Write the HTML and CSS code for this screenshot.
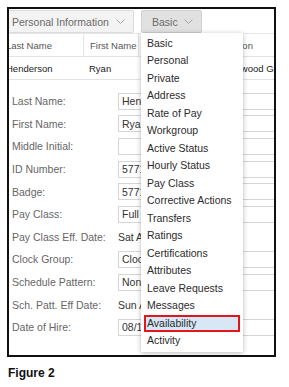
FILE: index.html
```html
<!DOCTYPE html>
<html>
<head>
    <title>Figure 2</title>
    <meta charset="UTF-8">
    <link rel="stylesheet" href="styles.css">
</head>
<body>
    <div class="frame">
        <div class="inner">
            <div class="toolbar">
                <div class="tab-button">Personal Information
                    <svg class="chev" width="9" height="5" viewBox="0 0 9 5"><polyline points="0.5,0.5 4.5,4.5 8.5,0.5" fill="none" stroke="#a8a8a8" stroke-width="1"/></svg>
                </div>
                <div class="tab-button active">Basic
                    <svg class="chev" width="9" height="5" viewBox="0 0 9 5"><polyline points="0.5,0.5 4.5,4.5 8.5,0.5" fill="none" stroke="#a8a8a8" stroke-width="1"/></svg>
                </div>
            </div>

            <div class="grid-table">
                <div class="grid-row head">
                    <div class="cell">Last Name</div>
                    <div class="cell">First Name</div>
                    <div class="cell">ID Number</div>
                    <div class="cell">Location</div>
                </div>
                <div class="grid-row">
                    <div class="cell">Henderson</div>
                    <div class="cell">Ryan</div>
                    <div class="cell">5771234</div>
                    <div class="cell">Ridgewood Gardens</div>
                </div>
            </div>

            <div class="form">
                <div class="form-row"><label>Last Name:</label><div class="field">Henderson</div></div>
                <div class="form-row"><label>First Name:</label><div class="field">Ryan</div></div>
                <div class="form-row"><label>Middle Initial:</label><div class="field"></div></div>
                <div class="form-row"><label>ID Number:</label><div class="field">5771234</div></div>
                <div class="form-row"><label>Badge:</label><div class="field">5771234</div></div>
                <div class="form-row"><label>Pay Class:</label><div class="field">Full Time</div></div>
                <div class="form-row"><label>Pay Class Eff. Date:</label><div class="plain">Sat Apr 01 2017</div></div>
                <div class="form-row"><label>Clock Group:</label><div class="field">Clock Group 1</div></div>
                <div class="form-row"><label>Schedule Pattern:</label><div class="field">None</div></div>
                <div class="form-row"><label>Sch. Patt. Eff Date:</label><div class="plain">Sun Apr 02 2017</div></div>
                <div class="form-row"><label>Date of Hire:</label><div class="field">08/15/2016</div></div>
            </div>
        </div>

        <ul class="menu">
            <li>Basic</li>
            <li>Personal</li>
            <li>Private</li>
            <li>Address</li>
            <li>Rate of Pay</li>
            <li>Workgroup</li>
            <li>Active Status</li>
            <li>Hourly Status</li>
            <li>Pay Class</li>
            <li>Corrective Actions</li>
            <li>Transfers</li>
            <li>Ratings</li>
            <li>Certifications</li>
            <li>Attributes</li>
            <li>Leave Requests</li>
            <li>Messages</li>
            <li class="selected">Availability</li>
            <li>Activity</li>
        </ul>
    </div>

    <p class="caption">Figure 2</p>
</body>
</html>
```

FILE: styles.css
```css
* {
    margin: 0;
    padding: 0;
    box-sizing: border-box;
}

body {
    font-family: 'Liberation Sans', Arial, sans-serif;
    background: white;
    width: 289px;
    height: 387px;
    overflow: hidden;
}

.frame {
    position: relative;
    margin: 7px 0 0 7px;
    width: 269px;
    height: 350px;
    border: 2px solid #111;
    overflow: hidden;
    background: white;
}

.inner {
    margin-left: -6px;
    width: 400px;
}

.toolbar {
    display: flex;
    gap: 7px;
    padding-top: 1px;
    height: 24px;
}

.tab-button {
    display: flex;
    align-items: center;
    justify-content: space-between;
    height: 23px;
    padding: 0 8px 0 8px;
    background: #f3f3f3;
    border: 1px solid #dcdcdc;
    border-radius: 2px;
    color: #6a6a6a;
    font-size: 10.5px;
    white-space: nowrap;
    width: 131px;
}

.tab-button.active {
    background: #e1e1e1;
    border-color: #d0d0d0;
    padding-left: 10px;
    width: 61px;
}

.chev {
    flex: none;
}

.grid-table {
    margin-left: -3px;
    border-top: 1px solid #e6e6e6;
}

.grid-row {
    display: grid;
    grid-template-columns: 83px 55px 72px 1fr;
    height: 23px;
    border-bottom: 1px solid #e3e3e3;
    font-size: 9.5px;
    color: #222;
}

.grid-row.head {
    color: #555;
    height: 23px;
}

.cell {
    display: flex;
    align-items: center;
    padding-left: 6px;
    white-space: nowrap;
    overflow: hidden;
}

.head .cell {
    border-left: 1px solid #e3e3e3;
}

.head .cell:first-child {
    border-left: none;
}

.form {
    padding: 10px 0 0 9px;
}

.form-row {
    display: grid;
    grid-template-columns: 106px 1fr;
    align-items: center;
    height: 22.6px;
    font-size: 10.5px;
}

.form-row label {
    color: #666;
    white-space: nowrap;
}

.field {
    height: 17px;
    border: 1px solid #d6d6d6;
    padding-left: 3px;
    display: flex;
    align-items: center;
    color: #333;
    white-space: nowrap;
}

.plain {
    color: #333;
    white-space: nowrap;
}

.menu {
    position: absolute;
    left: 132px;
    top: 24px;
    width: 102px;
    height: 319px;
    list-style: none;
    background: white;
    padding-top: 1.5px;
    box-shadow: 0 1px 5px rgba(0, 0, 0, 0.28);
    font-size: 10.5px;
    color: #2b2b2b;
}

.menu li {
    height: 17.5px;
    line-height: 13.5px;
    margin: 0 3px;
    padding-left: 1px;
    border: 2px solid transparent;
    white-space: nowrap;
}

.menu li.selected {
    background: #d7e7f5;
    border-color: #e3161b;
}

.caption {
    margin: 9px 0 0 8px;
    font-size: 12px;
    font-weight: bold;
    color: #111;
}
```
